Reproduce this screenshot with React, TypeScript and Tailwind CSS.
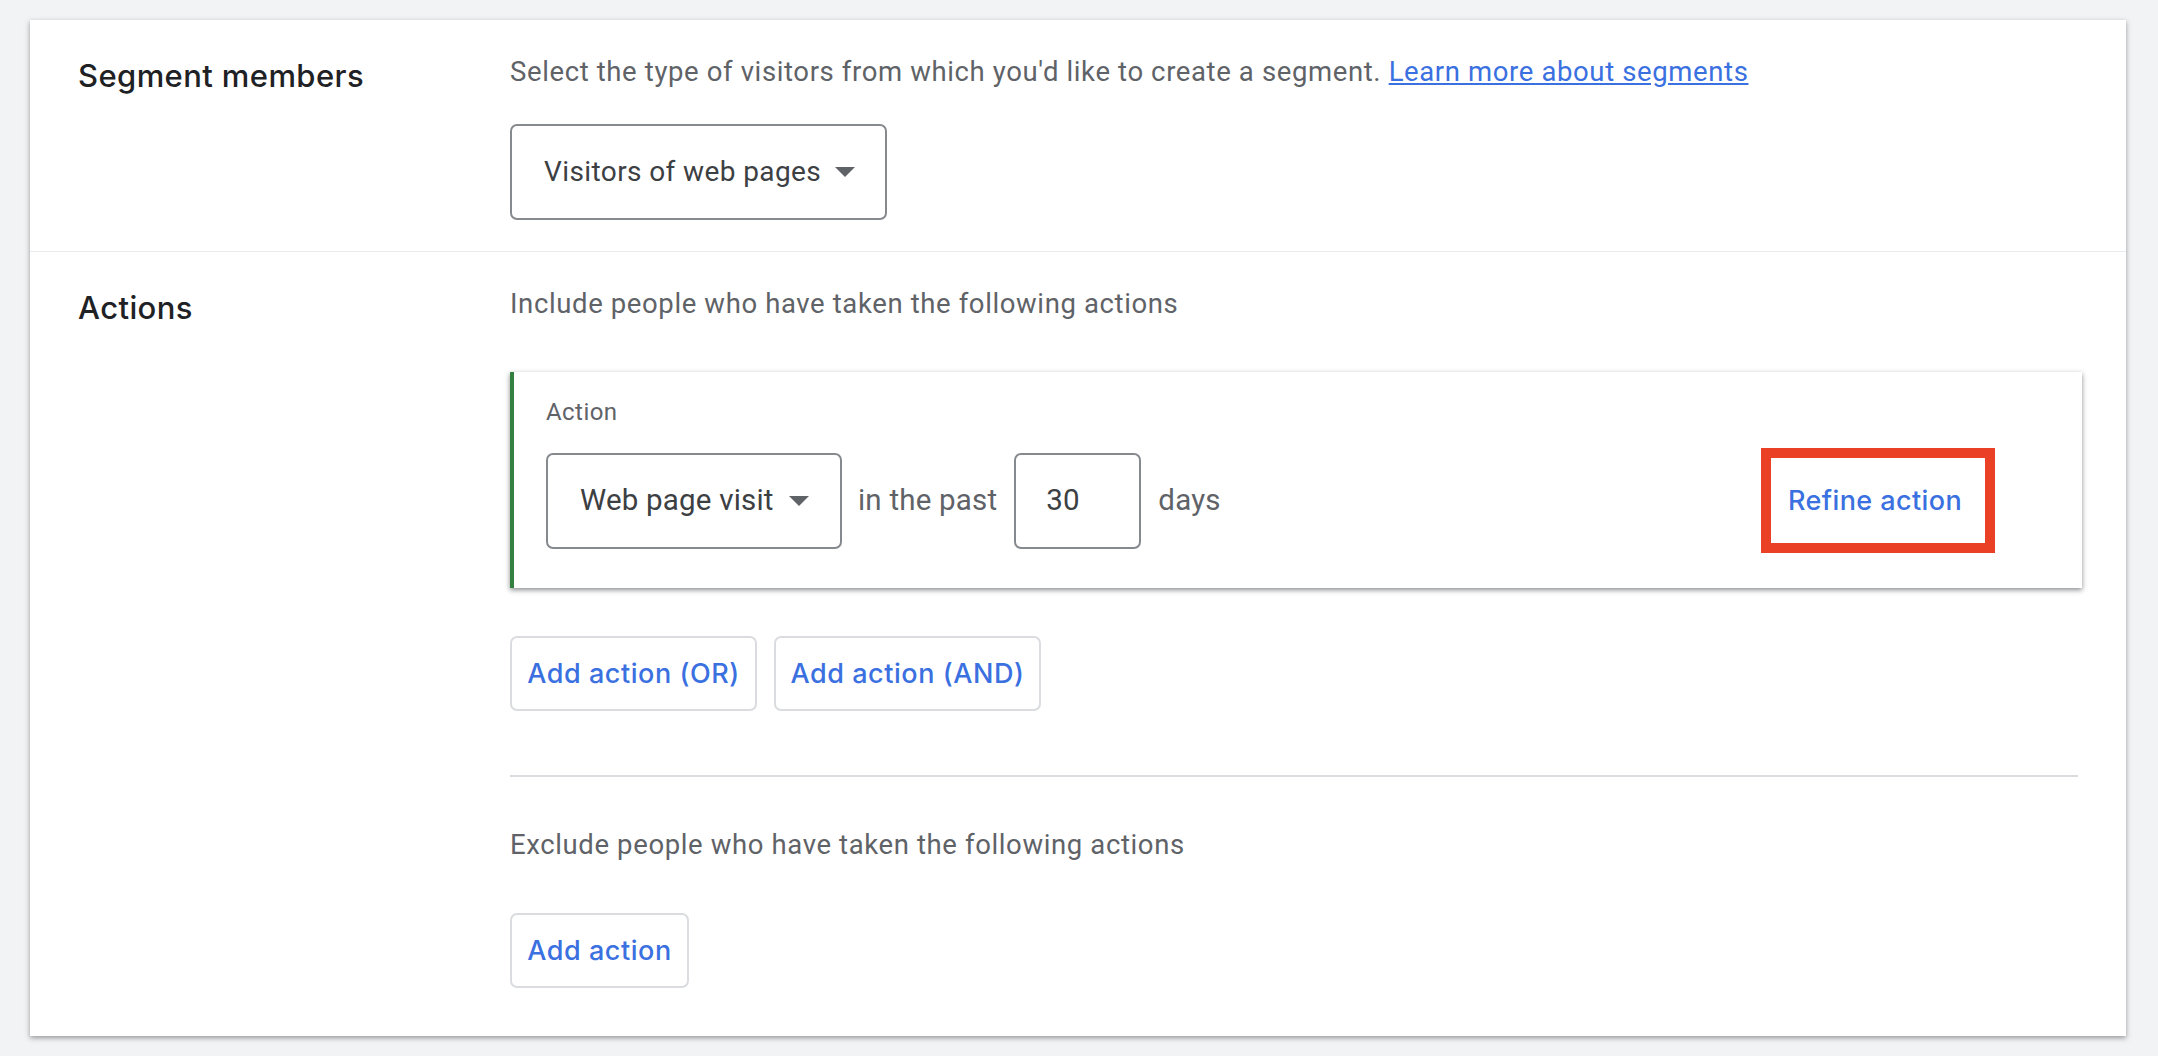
const sans = "font-['Roboto',sans-serif]";
const head = "font-['Inter',sans-serif]";

function Caret() {
  return (
    <svg width="20" height="10" viewBox="0 0 20 10" className="shrink-0">
      <path d="M0 0h20L10 10z" fill="#5f6368" />
    </svg>
  );
}

function Dropdown({ label, style }: { label: string; style: string }) {
  return (
    <div className={`h-[96px] flex items-center justify-between pl-[32px] border-2 border-[#868a8f] rounded-[7px] bg-white text-[#3c4043] ${style} ${sans}`}>
      <span>{label}</span>
      <Caret />
    </div>
  );
}

function Outline({ label, w }: { label: string; w: string }) {
  return (
    <button className={`${w} h-[75px] flex items-center justify-center pt-[2px] border-2 border-[#dadce0] rounded-[7px] bg-white text-[#3a70e0] text-[27px] tracking-[0.55px] font-medium ${head}`}>
      {label}
    </button>
  );
}

export default function App() {
  return (
    <div className={`min-h-[1056px] bg-[#f1f3f4] pt-[20px] pl-[30px] pr-[32px] ${sans}`}>
      <div className="h-[1016px] bg-white shadow-[0_2px_5px_rgba(60,64,67,0.5)]">
        <section className="h-[232px] flex border-b border-[#e8eaed] pl-[48px]">
          <h2 className={`w-[432px] pt-[36px] text-[31px] leading-[40px] tracking-[0.4px] font-medium text-[#202124] ${head}`}>Segment members</h2>
          <div className="pt-[34px]">
            <p className="text-[27.5px] leading-[36px] tracking-[0.62px] text-[#5f6368]">
              Select the type of visitors from which you'd like to create a segment.{" "}
              <a className="text-[#3a70e0] underline">Learn more about segments</a>
            </p>
            <div className="mt-[34px] flex">
              <Dropdown label="Visitors of web pages" style="w-[377px] pr-[30px] text-[28px] tracking-[0.4px]" />
            </div>
          </div>
        </section>
        <section className="flex pl-[48px] pr-[44px]">
          <h2 className={`w-[432px] pt-[36px] text-[31px] leading-[40px] tracking-[0.4px] font-medium text-[#202124] ${head}`}>Actions</h2>
          <div className="flex-1 pt-[34px]">
            <p className="text-[27.5px] leading-[36px] tracking-[0.62px] text-[#5f6368]">Include people who have taken the following actions</p>
            <div className="mt-[50px] h-[216px] border-l-[4px] border-[#34803f] bg-white shadow-[0_2px_5px_rgba(60,64,67,0.6)] pl-[32px] pr-[87px] pt-[26px]">
              <div className="text-[24px] leading-[28px] tracking-[0.45px] text-[#5f6368]">Action</div>
              <div className="mt-[22px] flex items-center text-[29.5px] tracking-[0.2px] text-[#5f6368]">
                <Dropdown label="Web page visit" style="w-[296px] pr-[31px]" />
                <span className="ml-[16px]">in the past</span>
                <div className="ml-[17px] w-[127px] h-[96px] flex items-center pl-[30px] border-2 border-[#868a8f] rounded-[7px] text-[#3c4043]">30</div>
                <span className="ml-[17px]">days</span>
                <div className={`ml-auto w-[234px] h-[105px] border-[10px] border-[#ea4025] flex items-center justify-center pt-[2px] pr-[6px] text-[27px] tracking-[0.4px] font-medium text-[#3a70e0] ${head}`}>Refine action</div>
              </div>
            </div>
            <div className="mt-[48px] flex gap-[17px]">
              <Outline label="Add action (OR)" w="w-[247px]" />
              <Outline label="Add action (AND)" w="w-[267px]" />
            </div>
            <div className="mt-[64px] mr-[4px] border-t-2 border-[#dadce0]" />
            <p className="mt-[50px] text-[27.5px] leading-[36px] tracking-[0.62px] text-[#5f6368]">Exclude people who have taken the following actions</p>
            <div className="mt-[50px] flex">
              <Outline label="Add action" w="w-[179px]" />
            </div>
          </div>
        </section>
      </div>
    </div>
  );
}
